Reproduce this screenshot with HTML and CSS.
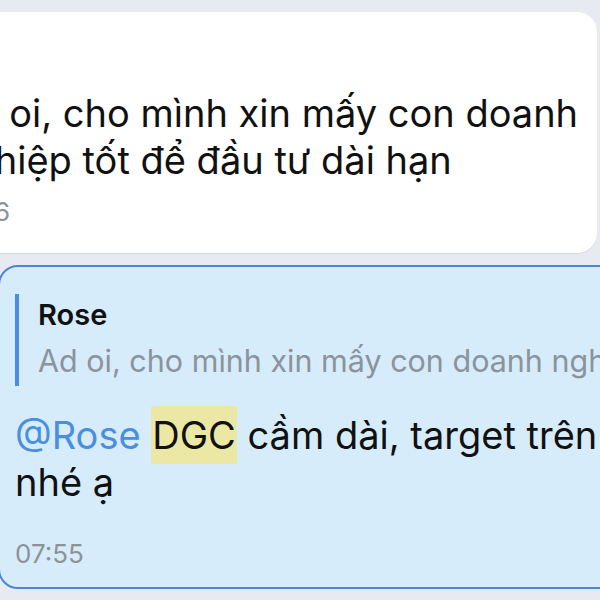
FILE: index.html
```html
<!DOCTYPE html>
<html lang="vi">
<head>
  <meta charset="UTF-8">
  <title>Chat</title>
  <link rel="stylesheet" href="styles.css">
</head>
<body>

  <div class="feed">

    <!-- tin nhắn đến -->
    <div class="msg incoming">
      <p class="text">Ad oi, cho mình xin mấy con doanh nghiệp tốt để đầu tư dài hạn</p>
      <span class="time">07:46</span>
    </div>

    <!-- tin trả lời -->
    <div class="msg reply">
      <div class="quote">
        <div class="quote-name">Rose</div>
        <div class="quote-text">Ad oi, cho mình xin mấy con doanh nghiệp tốt để đầu tư dài hạn</div>
      </div>
      <p class="text"><span class="mention">@Rose</span> <span class="ticker">DGC</span> cầm dài, target trên 200 nhé ạ</p>
      <span class="time">07:55</span>
    </div>

  </div>

</body>
</html>
```

FILE: styles.css
```css
html, body {
  margin: 0;
  height: 100%;
  overflow: hidden;
}

body {
  font-family: Inter, "Noto Sans", sans-serif;
  background: #e8eaf2;
  color: #111;
}

.feed {
  display: flex;
  flex-direction: column;
  gap: 12px;
  padding-top: 12px;
}

.msg {
  box-sizing: border-box;
  border-radius: 20px;
}

.incoming {
  width: 663px;
  margin-left: -66px;
  height: 241px;
  padding: 78px 16px 0 15px;
  background: #fff;
  box-shadow: 0 1px 0 #d7d9e0;
}

.text {
  margin: 0;
  font-size: 38px;
  line-height: 47px;
}

.time {
  display: block;
  margin-top: 12px;
  font-size: 26px;
  color: #8e9298;
}

.incoming .time {
  margin-left: -9px;
}

.reply {
  width: 760px;
  margin-left: -2px;
  height: 324px;
  padding: 27px 15px 0 15px;
  background: #d6ecfb;
  border: 2px solid #4a86d7;
}

.quote {
  border-left: 4px solid #4a8ee3;
  padding-left: 19px;
  margin-bottom: 26px;
  white-space: nowrap;
}

.quote-name {
  font-size: 29px;
  font-weight: 600;
  line-height: 42px;
}

.quote-text {
  font-size: 30.5px;
  line-height: 50px;
  color: #8b939c;
}

.reply .text {
  width: 700px;
}

.mention {
  color: #4a8fdf;
}

.ticker {
  background: #ebe8a6;
  padding: 6px 1px;
}

.reply .time {
  margin-top: 32px;
}
```
